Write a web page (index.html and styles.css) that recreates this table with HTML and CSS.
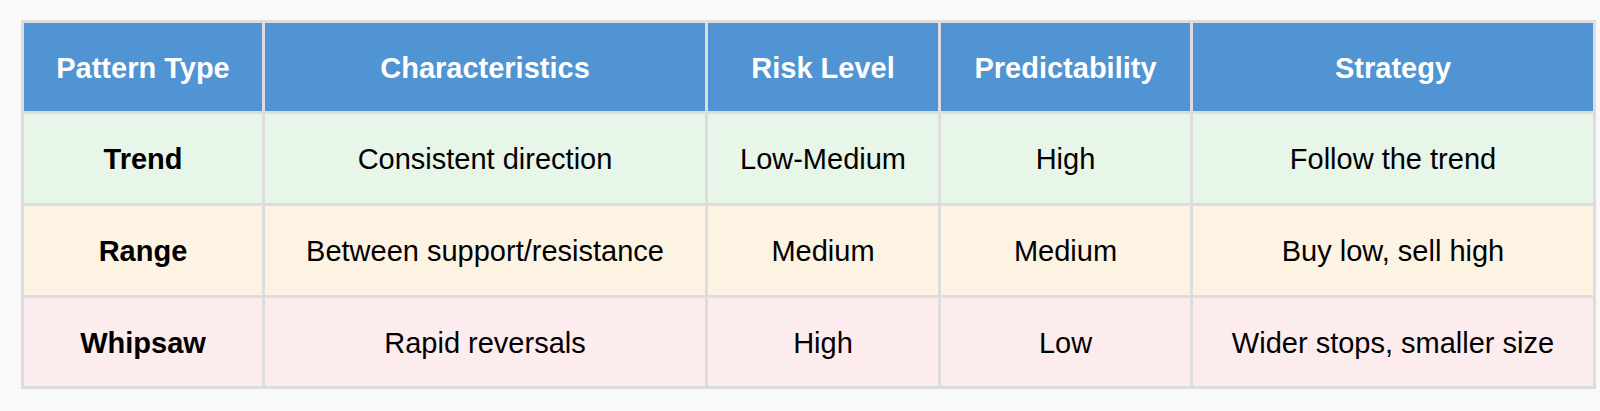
FILE: index.html
```html
<!DOCTYPE html>
<html>
<head>
<meta charset="utf-8">
<link rel="stylesheet" href="styles.css">
</head>
<body>
<div class="page">
  <table class="patterns">
    <colgroup>
      <col class="c1"><col class="c2"><col class="c3"><col class="c4"><col class="c5">
    </colgroup>
    <thead>
      <tr class="head">
        <th>Pattern Type</th>
        <th>Characteristics</th>
        <th>Risk Level</th>
        <th>Predictability</th>
        <th>Strategy</th>
      </tr>
    </thead>
    <tbody>
      <tr class="row trend">
        <td class="name">Trend</td>
        <td>Consistent direction</td>
        <td>Low-Medium</td>
        <td>High</td>
        <td>Follow the trend</td>
      </tr>
      <tr class="row range">
        <td class="name">Range</td>
        <td>Between support/resistance</td>
        <td>Medium</td>
        <td>Medium</td>
        <td>Buy low, sell high</td>
      </tr>
      <tr class="row whipsaw">
        <td class="name">Whipsaw</td>
        <td>Rapid reversals</td>
        <td>High</td>
        <td>Low</td>
        <td>Wider stops, smaller size</td>
      </tr>
    </tbody>
  </table>
</div>
</body>
</html>
```

FILE: styles.css
```css
html, body {
  margin: 0;
  padding: 0;
  background: #f9f9f9;
}

.page {
  padding: 20px 0 0 21px;
  font-family: "Liberation Sans", Arial, Helvetica, sans-serif;
  font-size: 29px;
  color: #000;
}

.patterns {
  table-layout: fixed;
  width: 1575px;
  border-collapse: separate;
  border-spacing: 3px;
  background: #dddddd;
}

.c1 { width: 238px; }
.c2 { width: 440px; }
.c3 { width: 230px; }
.c4 { width: 249px; }
.c5 { width: 400px; }

.patterns th,
.patterns td {
  padding: 2px 0 0;
  text-align: center;
  vertical-align: middle;
}

.head th {
  height: 86px;
  background: #5094d4;
  color: #fff;
  font-weight: bold;
}

.row td {
  height: 87px;
}

.row .name {
  font-weight: bold;
}

.trend td { background: #e8f5e9; }
.range td { background: #fdf3e3; }
.whipsaw td { background: #fdecee; }
.whipsaw td { height: 86px; }
```
